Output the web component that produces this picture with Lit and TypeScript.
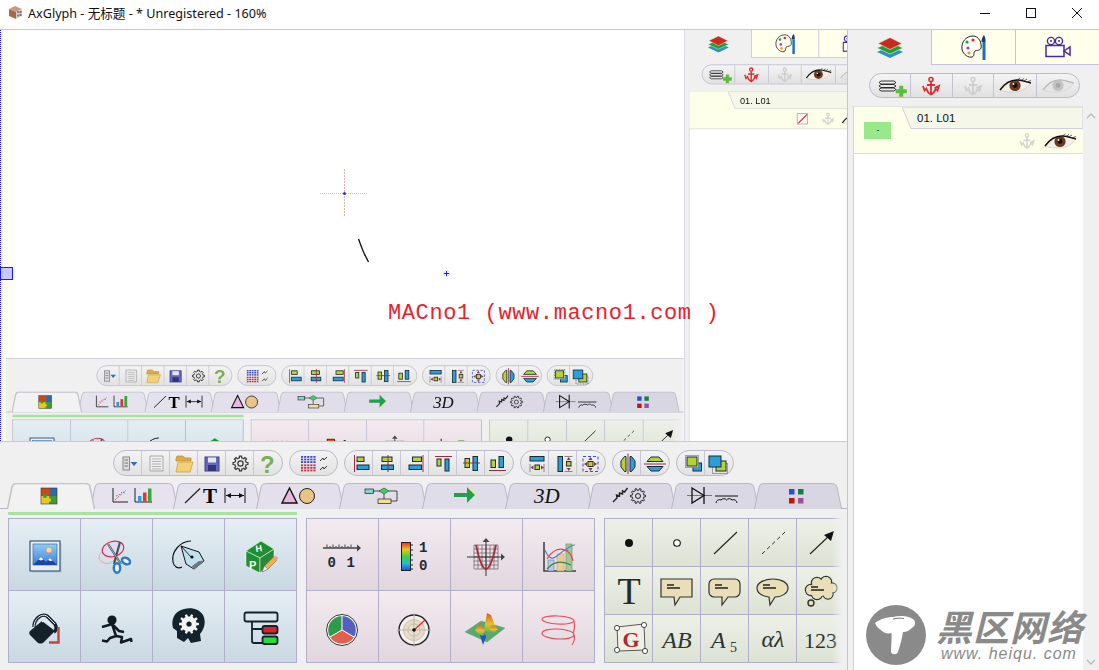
import { LitElement, html, css, svg } from "lit";
import { customElement, property } from "lit/decorators.js";

const LIME = "#b5d334", BLUE = "#2a9fd8", RED = "#9c2b3c", INK = "#1b2a38";

function gearPath(cx: number, cy: number, r: number, teeth: number) {
  let d = "";
  const inner = r * 0.76;
  const step = (Math.PI * 2) / teeth;
  for (let i = 0; i < teeth; i++) {
    const a = i * step;
    const pts = [
      [inner, a - step * 0.5], [inner, a - step * 0.28], [r, a - step * 0.18], [r, a + step * 0.18], [inner, a + step * 0.28],
    ];
    for (const [rad, ang] of pts) {
      d += `${d ? "L" : "M"}${(cx + rad * Math.cos(ang)).toFixed(2)} ${(cy + rad * Math.sin(ang)).toFixed(2)}`;
    }
  }
  return d + "Z";
}

const box = (x: number, y: number, w: number, h: number, fill: string) =>
  svg`<rect x=${x} y=${y} width=${w} height=${h} fill=${fill} stroke=${INK} stroke-width="1"/>`;
const line = (x1: number, y1: number, x2: number, y2: number, c = RED, w = 1) =>
  svg`<line x1=${x1} y1=${y1} x2=${x2} y2=${y2} stroke=${c} stroke-width=${w}/>`;

const ic = (w: number, h: number, body: unknown) =>
  html`<svg class="ic" width=${w} height=${h} viewBox="0 0 ${w} ${h}">${body}</svg>`;

/* ---------- toolbar ---------- */
const tb = (body: unknown) => ic(28, 25, body);
const toolGroups = [
  [
    tb(svg`<rect x="9" y="6" width="6.5" height="13" fill="#ddd" stroke="#888"/><path d="M10.5 9h3.5M10.5 12h3.5M10.5 15h3.5" stroke="#777"/><path d="M16.5 11h7l-3.500 4z" fill="#2a6fc0"/>`),
    tb(svg`<path d="M8 5h13v15H8z" fill="#eceef0" stroke="#a8a8a8"/><path d="M10 8h9M10 10.5h9M10 13h9M10 15.5h9M10 18h9" stroke="#b4b4b4"/>`),
    tb(svg`<path d="M6 8l1-3h6l2 2h6v3H6z" fill="#d9ad4a" stroke="#b99030" stroke-width=".7"/><path d="M6 21l2-10h15l-3 10z" fill="#f3cf75" stroke="#c79c3a" stroke-width=".7"/>`),
    tb(svg`<rect x="7" y="6" width="14" height="14" fill="#6668bd" stroke="#3f4090"/><rect x="10" y="6.5" width="8" height="5" fill="#e8e8f4"/><rect x="10" y="14" width="8" height="6" fill="#33347f"/>`),
    tb(svg`<path d=${gearPath(14.5, 12.5, 7.5, 8)} fill="none" stroke="#333" stroke-width="1.2"/><circle cx="14.5" cy="12.5" r="2.6" fill="none" stroke="#333" stroke-width="1.2"/>`),
    tb(svg`<text x="6" y="21.500" class="qm">?</text>`),
  ],
  [
    ic(47, 25, svg`
      ${[0, 1, 2, 3, 4, 5].map((r) => [0, 1, 2, 3, 4].map((c) => svg`<rect x=${11 + c * 3.1} y=${5 + r * 2.6 + (r > 2 ? 0.6 : 0)} width="2.2" height="1.8" fill=${r > 2 ? "#c0354a" : "#3f4fc0"}/>`))}
      <path d="M30 10l3-3 1 2 3-3M30 19l3-3 1 2 3-3" fill="none" stroke="#333" stroke-width="1"/>`),
  ],
  [
    tb(svg`${line(9.5, 4, 9.5, 21)}${box(12, 6, 7, 4.5, LIME)}${box(12, 14, 12, 4.5, BLUE)}`),
    tb(svg`${box(9, 6, 10, 4.5, LIME)}${box(8.5, 14, 12, 4.5, BLUE)}${line(15, 4, 15, 21)}`),
    tb(svg`${box(11.5, 6, 9, 4.5, LIME)}${box(8, 14, 12.5, 4.5, BLUE)}${line(22, 4, 22, 21)}`),
    tb(svg`${line(6, 5.5, 23, 5.5)}${box(8, 8, 4, 7, LIME)}${box(16, 8, 4, 12, BLUE)}`),
    tb(svg`${box(8, 7.5, 4.5, 9, LIME)}${box(16, 5.5, 4.5, 14, BLUE)}${line(6, 12, 23, 12)}`),
    tb(svg`${box(6, 9, 4.5, 7.5, LIME)}${box(14, 5.5, 4.5, 11, BLUE)}${line(4, 19.5, 21, 19.5)}`),
  ],
  [
    tb(svg`${box(9, 5.5, 14, 4.5, BLUE)}${box(14, 14, 4.5, 4.5, LIME)}<path d="M9 13v8M23 13v8" stroke="#888"/><path d="M9.5 16.5l3-2v4zM23 16.5l-3-2v4z" fill=${RED}/>`),
    tb(svg`${box(9, 5.5, 4.5, 15, BLUE)}${box(17.5, 10.5, 4.5, 4.5, LIME)}<path d="M15.5 5.5h8M15.5 20.5h8" stroke="#888"/><path d="M19.7 6l-2 3h4zM19.7 20l-2-3h4z" fill=${RED}/>`),
    tb(svg`<rect x="6" y="5.5" width="15" height="15" fill="none" stroke="#4050c8" stroke-dasharray="3 2"/>${box(11, 10.5, 5, 5, LIME)}<path d="M13.5 6l-2 3h4zM13.5 20l-2-3h4zM7 13l3-2v4zM20 13l-3-2v4z" fill=${RED}/>`),
  ],
  [
    tb(svg`<path d="M13 5.500v15H11.500L8 16v-6l3.500-4.500z" fill=${LIME} stroke=${INK}/><path d="M17 5.500h1.500l3.500 4.500v6l-3.500 4.500H17z" fill=${BLUE} stroke=${INK}/>${line(15, 2.5, 15, 23)}`),
    tb(svg`<path d="M6 10.500l4-4.500h8l4 4.500z" fill=${LIME} stroke=${INK}/><path d="M6 15.500h16l-4 4.500h-8z" fill=${BLUE} stroke=${INK}/>${line(3, 13, 25, 13)}`),
  ],
  [
    tb(svg`${box(16, 12, 8.5, 8, BLUE)}<rect x="8.500" y="4.500" width="13" height="12" fill="#f4f4f4" stroke="#555" stroke-dasharray="1 1"/>${box(10, 6, 10, 9, LIME)}`),
    tb(svg`<rect x="7.500" y="12.500" width="15" height="10" fill="none" stroke="#555" stroke-dasharray="1 1"/>${box(11, 10, 10, 10, LIME)}${box(4, 5, 12, 11, BLUE)}`),
  ],
];

/* ---------- tabs ---------- */
const puzzle = svg`<rect x="34" y="5" width="8" height="8" fill="#c8481c"/><rect x="42" y="5" width="8" height="8" fill="#2a6cb0"/><rect x="34" y="13" width="8" height="8" fill="#e8c818"/><rect x="42" y="13" width="8" height="8" fill="#3f9a3a"/><circle cx="42" cy="9" r="2" fill="#c8481c"/><circle cx="42" cy="17" r="2" fill="#e8c818"/><circle cx="38" cy="13" r="2" fill="#3f9a3a"/><rect x="34" y="5" width="16" height="16" fill="none" stroke="#333" stroke-width=".6"/>`;
const tabIcons = [
  puzzle,
  svg`<path d="M23 5v14h15" fill="none" stroke="#222" stroke-width="1"/><path d="M25 17l11-10" stroke="#e04050" stroke-dasharray="2 1.5"/><path d="M26 13l3-1 3-3 3 1" fill="none" stroke="#3a90d0" stroke-dasharray="1.5 1.5"/>
      <path d="M45 5v14h17" fill="none" stroke="#222" stroke-width="1"/><rect x="48" y="13" width="3.5" height="5.5" fill="#2a9fd8"/><rect x="53" y="9.5" width="3.5" height="9" fill="#d83838"/><rect x="58" y="5.5" width="3.5" height="13" fill="#38a838"/>`,
  svg`<line x1="12" y1="20" x2="27" y2="5.5" stroke="#222" stroke-width="1.2"/><text x="30" y="20" class="serifb" font-size="21">T</text>
      <path d="M52 5v15M72 5v15M53 12.5h18" stroke="#111" stroke-width="1"/><path d="M53 12.5l5-2.5v5zM71 12.5l-5-2.5v5z" fill="#111"/>`,
  svg`<path d="M33.5 5L26 20h15z" fill="#e8b8e0" stroke="#111" stroke-width="1.4"/><circle cx="51" cy="13" r="7.5" fill="#e8c584" stroke="#222" stroke-width="1"/>`,
  svg`<rect x="26" y="6" width="8.5" height="4.5" fill="#7fd8c8" stroke="#222" stroke-width=".7"/><path d="M34 8h7M50 8h8v10h-6M45 11v5" fill="none" stroke="#222" stroke-width=".8"/><path d="M45 5l5 3-5 3-5-3z" fill="#40d060" stroke="#222" stroke-width=".5"/><rect x="39" y="16" width="13" height="4.5" fill="#f0e090" stroke="#222" stroke-width=".7"/>`,
  svg`<path d="M32 10h13V4l8 8-8 8v-6H32z" fill="#1f9f4f"/><path d="M45 4l8 8-8 8" fill="none" stroke="#b5d334" stroke-width=".8"/>`,
  svg`<text x="29" y="20" class="serifi" font-size="21" fill="#111">3D</text>`,
  svg`<path d="M25 19l4-4-.5-3 3 1 0-3 3 1 0-3 2 1 3-4" fill="none" stroke="#222" stroke-width="1.4"/><path d=${gearPath(50, 13, 7.5, 10)} fill="none" stroke="#222" stroke-width="1"/><circle cx="50" cy="13" r="2.5" fill="none" stroke="#222"/>`,
  svg`<path d="M16 12.500h25" stroke="#777" stroke-width="1"/><path d="M21 5l12 7.500-12 7.500z" fill="none" stroke="#111" stroke-width="1.3"/><path d="M33 4v17" stroke="#111" stroke-width="1.3"/><path d="M44 13h23" stroke="#111" stroke-width="1"/><path d="M45 20a3.500 3.500 0 0 1 5-3a3.500 3.500 0 0 1 5.500 0a3.500 3.500 0 0 1 5.500 0a3.500 3.500 0 0 1 5 3" fill="none" stroke="#111" stroke-width="1"/>`,
  svg`<rect x="35" y="6" width="5.5" height="5.5" fill="#2a50d0"/><rect x="44" y="6" width="5.5" height="5.5" fill="#108048"/><rect x="35" y="15" width="5.5" height="5.5" fill="#c81010"/><rect x="44" y="15" width="5.5" height="5.5" fill="#9a509a"/>`,
];

/* ---------- grid icons ---------- */
const cell1 = [
  svg`<defs><linearGradient id="sky" x1="0" y1="0" x2="0" y2="1"><stop offset="0" stop-color="#8fcdf0"/><stop offset="1" stop-color="#3a7fdc"/></linearGradient></defs>
      <rect x="23" y="24" width="30" height="30" fill="#b9cad6" opacity=".6"/><rect x="21" y="22" width="30" height="30" fill="#e6eef4" stroke="#1d3a5c" stroke-width="1"/>
      <rect x="24" y="25" width="24" height="21" fill="url(#sky)" stroke="#2a5a9c" stroke-width=".6"/><circle cx="40" cy="31" r="3" fill="#f7d99a" stroke="#e8866a" stroke-width=".7"/>
      <path d="M24 46l8-8 5 5 4-4 7 7z" fill="#1f44a8"/><path d="M29.5 40.5l2.5-2.5 2.5 2.5-2.5 1zM39 41l2-2 2.5 2.5-2 .5z" fill="#fff"/>`,
  svg`<ellipse cx="26" cy="38" rx="8" ry="6.5" fill="none" stroke="#e4a8a8" stroke-width="1"/><ellipse cx="32" cy="30" rx="11" ry="7.5" transform="rotate(-15 32 30)" fill="#dcdcf4" stroke="#d83040" stroke-width="1.2"/>
      <path d="M27 25l13 20M39 23l-6 22" stroke="#4a5460" stroke-width="2.2"/><path d="M27 25l13 20" stroke="#b8c0c8" stroke-width=".8"/>
      <ellipse cx="36" cy="49" rx="3.2" ry="4.8" fill="#e8f0f4" stroke="#2a7cc0" stroke-width="2.4"/><ellipse cx="45" cy="42" rx="4.4" ry="3" transform="rotate(30 45 42)" fill="#e8f0f4" stroke="#2a7cc0" stroke-width="2.4"/>`,
  svg`<path d="M38 22C27 22 18 33 20 43c1 5 5 7 9 5" fill="none" stroke="#111" stroke-width="1.2"/><path d="M28 27l18 6 5 9-10 8-8-5z" fill="#c0e0ee" stroke="#111" stroke-width="1"/><path d="M46 42l6-0.500-11 9-2-3.500z" fill="#6c7880"/><path d="M28 27l10 11" stroke="#111" stroke-width=".9"/><circle cx="39" cy="38" r="1.6" fill="#111"/>`,
  svg`<path d="M21 32l15-10 13 8-14 9z" fill="#1f9030" stroke="#fff" stroke-width=".5"/><path d="M21 32l14 7v15l-14-7z" fill="#1f9030" stroke="#fff" stroke-width=".5"/><path d="M35 39l14-9v9l-14 15z" fill="#27883a" stroke="#fff" stroke-width=".5"/>
      <text x="31" y="33" class="sansb" font-size="9" fill="#fff" transform="rotate(-8 31 33)">H</text><text x="24" y="50" class="sansb" font-size="11" fill="#fff">P</text>
      <path d="M37 53l2.5-6 9-9 3.5 3-9 9z" fill="#eeb050" stroke="#8a6a3a" stroke-width=".6"/><path d="M48.5 38l2-1.5 3 2.5-1.7 2z" fill="#f0a0a0"/><path d="M37 53l2.5-6 3.5 3z" fill="#eee" stroke="#555" stroke-width=".4"/>`,
  svg`<path d="M21 40l12-10 13 10-11 11c-2 2-5 2-7 0l-7-7c-1-1-1-3 0-4z" fill="#14212a"/><path d="M25 36c0-8 7-14 13-11l8 8c2 3 1 7-1 8" fill="none" stroke="#14212a" stroke-width="3.400"/><path d="M25 36c0-8 7-14 13-11l8 8" fill="none" stroke="#e4edf3" stroke-width="1"/><path d="M33 31c2-2 4-2 6 0l4 5" fill="none" stroke="#e4edf3" stroke-width="1.200"/>
      <path d="M49.500 36v15.500H40" fill="none" stroke="#b84a3c" stroke-width="2.400"/>`,
  svg`<circle cx="31" cy="29" r="4.6" fill="#111a20"/><path d="M21 36l7-2 3-1 7 7 5 1M31 33l4 12M35 45l-6 2-3 3.500-5-1M35 45l6 1-1 5.500 10-3.500 .5 3" fill="none" stroke="#111a20" stroke-width="2.500" stroke-linejoin="round"/>`,
  svg`<path d="M31 51l-7-4v-7l-4-3c-2-8 1-14 6-17 9-5 20-3 24 4 3 6 2 13-3 19l1 7-10 2-3-5z" fill="#14232b"/><path d=${gearPath(36, 33, 10, 10)} fill="#f4f4f4"/><circle cx="36" cy="33" r="2.6" fill="#14232b"/>`,
  svg`<rect x="19.5" y="21.5" width="33" height="9" rx="2" fill="none" stroke="#14232b" stroke-width="1.8"/><path d="M27 31v19a2 2 0 0 0 2 2h8M27 38h10" fill="none" stroke="#14232b" stroke-width="1.8"/><rect x="37.5" y="35" width="15" height="7.5" rx="2" fill="#e02030" stroke="#14232b" stroke-width="1.8"/><rect x="37.5" y="45.5" width="15" height="7.5" rx="2" fill="#20e040" stroke="#14232b" stroke-width="1.8"/>`,
];
const rainbow = svg`<defs><linearGradient id="rb" x1="0" y1="0" x2="0" y2="1"><stop offset="0" stop-color="#e83020"/><stop offset=".25" stop-color="#f0c020"/><stop offset=".5" stop-color="#40d040"/><stop offset=".75" stop-color="#20c0d0"/><stop offset="1" stop-color="#2050e0"/></linearGradient>
  <linearGradient id="pk" x1="0" y1="0" x2="0" y2="1"><stop offset="0" stop-color="#d06020"/><stop offset=".55" stop-color="#e8c030"/><stop offset="1" stop-color="#60b050"/></linearGradient></defs>`;
const cell2 = [
  svg`<path d="M16 29h36" stroke="#444" stroke-width="1.3"/><path d="M50 25.5l4 3.5-4 3.5z" fill="#444"/><path d="M20 25.5v3M26 25.5v3M32 25.5v3M38 25.5v3M44 25.5v3" stroke="#444"/><path d="M23 27v2M29 27v2M35 27v2M41 27v2" stroke="#444"/>
      <text x="20.5" y="48" class="monob" font-size="14" fill="#1b2a38">0</text><text x="39.5" y="48" class="monob" font-size="14" fill="#1b2a38">1</text>`,
  svg`${rainbow}<rect x="22.5" y="23.5" width="9" height="28" fill="url(#rb)" stroke="#222" stroke-width="1"/><path d="M32 26h2M32 31h2M32 36h2M32 41h2M32 46h2M32 50h2" stroke="#222"/>
      <text x="40" y="33" class="monob" font-size="14" fill="#1b2a38">1</text><text x="40" y="51" class="monob" font-size="14" fill="#1b2a38">0</text>`,
  svg`<path d="M23 26h24v24H23zM23 30h24M23 34h24M23 38h24M23 42h24M23 46h24M27 26v24M31 26v24M35 26v24M39 26v24M43 26v24" fill="none" stroke="#7a6a72" stroke-width=".8"/><path d="M16 38h36M35 21v36" stroke="#333" stroke-width="1"/><path d="M35 19l-3.5 4h7zM54 38l-4-3.5v7z" fill="#444"/><path d="M25 26c3 14 6 24 10 24s7-10 10-24" fill="none" stroke="#a8283c" stroke-width="1.8"/>`,
  svg`<path d="M21 23v29h32" fill="none" stroke="#444" stroke-width="1.6"/><rect x="25" y="41" width="6" height="11" fill="#b8cce0" stroke="#5a80b0" stroke-width=".6"/><rect x="34" y="35" width="7" height="17" fill="#eacb94" stroke="#c8a060" stroke-width=".6"/><rect x="43" y="25" width="6" height="27" fill="#a0c898" stroke="#60905a" stroke-width=".6"/>
      <path d="M22 31c4 10 8 9 12 6s8-8 11-5" fill="none" stroke="#4a80d0" stroke-width="1.2"/><path d="M24 40c6-10 14-12 20-8 3 2 5 5 6 10" fill="none" stroke="#e04850" stroke-width="1.2"/><path d="M24 50c6-7 14-9 24-4" fill="none" stroke="#408040" stroke-width="1.2"/><path d="M42 31c3-2 6-5 10-5" fill="none" stroke="#4a80d0" stroke-width="1.2"/>`,
  svg`<circle cx="35" cy="39" r="15.5" fill="#fff" stroke="#333" stroke-width="1"/><path d="M35 39l0-14a14 14 0 0 0-12 21z" fill="#2f9a4c"/><path d="M35 39l0-14a14 14 0 0 1 12 21z" fill="#5460c0"/><path d="M35 39l12 7a14 14 0 0 1-24 0z" fill="#e0604a"/><path d="M35 39V25M35 39l12 7M35 39l-12 7" stroke="#fff" stroke-width="1"/>`,
  svg`<circle cx="35" cy="39" r="15" fill="#f4eef0" stroke="#222" stroke-width="1.4"/><circle cx="35" cy="39" r="10.5" fill="#e6dcc8" stroke="#cfc4b0"/><circle cx="35" cy="39" r="6" fill="#ece2cc" stroke="#c8bca8"/><path d="M18 39h34M35 22v34" stroke="#bcb4b0" stroke-width="1"/><path d="M35 39l11-10" stroke="#e82030" stroke-width="1.2"/><circle cx="35" cy="39" r="1.8" fill="#111"/>`,
  svg`${rainbow}<path d="M14 41l16-11 24 7-18 14z" fill="#5aaa70" stroke="#3e9060" stroke-width=".3"/><path d="M33 39l3-17 4 2 5 13-6 5z" fill="url(#pk)"/><path d="M24 39l5-6 5 7-4 5z" fill="url(#pk)"/><path d="M38 38l4-4 5 4-4 4z" fill="url(#pk)"/><path d="M29 44l3 1 2-2 1 2 0 1-3 8z" fill="#2050d0"/>`,
  svg`<ellipse cx="35" cy="29" rx="16" ry="4" transform="rotate(3 35 29)" fill="none" stroke="#e84858" stroke-width="1.1"/><ellipse cx="35" cy="43" rx="16" ry="5" transform="rotate(3 35 43)" fill="none" stroke="#e84858" stroke-width="1.1"/><path d="M51 30c1 5 1 8-1 12M51 44c1 3 0 7-2 10" fill="none" stroke="#e84858" stroke-width="1.1"/>`,
];
const bubbleLines = svg`<path d="M14 18h7M14 21h13" stroke="#222" stroke-width="1.5"/>`;
const B = "#e8dfb8";
const cell3 = [
  svg`<circle cx="24" cy="24" r="4" fill="#111"/>`,
  svg`<circle cx="24" cy="24" r="3.3" fill="#fff" stroke="#111" stroke-width="1.1"/>`,
  svg`<line x1="13" y1="35" x2="36" y2="13" stroke="#222" stroke-width="1.1"/>`,
  svg`<line x1="13" y1="35" x2="36" y2="13" stroke="#333" stroke-width="1" stroke-dasharray="4 3"/>`,
  svg`<line x1="13" y1="35" x2="33" y2="16" stroke="#222" stroke-width="1.1"/><path d="M37 12l-3 10-7-6z" fill="#111"/>`,
  svg`<text x="24" y="37" text-anchor="middle" class="serif" font-size="38" fill="#222d28">T</text>`,
  svg`<path d="M8 12h31v18H27l-5 8-1-8H8z" fill=${B} stroke="#333" stroke-width="1.2"/>${bubbleLines}`,
  svg`<path d="M13 12h21a5 5 0 0 1 5 5v8a5 5 0 0 1-5 5H27l-6 8v-8h-8a5 5 0 0 1-5-5v-8a5 5 0 0 1 5-5z" fill=${B} stroke="#333" stroke-width="1.2"/>${bubbleLines}`,
  svg`<path d="M24 12c9 0 15 4 15 9s-6 9-13 9l-5 8-1-8c-7-1-12-4-12-9s7-9 16-9z" fill=${B} stroke="#333" stroke-width="1.2"/>${bubbleLines}`,
  svg`<g stroke="#333" stroke-width="1.4" fill=${B}><circle cx="14" cy="23" r="5.5"/><circle cx="20" cy="16" r="5.5"/><circle cx="29" cy="15" r="5.5"/><circle cx="35" cy="21" r="5"/><circle cx="31" cy="27" r="5"/><circle cx="20" cy="27" r="5.5"/><circle cx="14" cy="36" r="3"/></g><g fill=${B}><circle cx="14" cy="23" r="5"/><circle cx="20" cy="16" r="5"/><circle cx="29" cy="15" r="5"/><circle cx="35" cy="21" r="4.5"/><circle cx="31" cy="27" r="4.5"/><circle cx="20" cy="27" r="5"/><circle cx="24" cy="21" r="8"/></g><path d="M14 20h7M14 23h13" stroke="#222" stroke-width="1.5"/>`,
  svg`<path d="M12 12l27-3 1 26-27 1z" fill="#f2f0e6" stroke="#333" stroke-width=".8"/><text x="26" y="32" text-anchor="middle" class="serifb" font-size="22" fill="#b02828">G</text><g fill="#fff" stroke="#333" stroke-width=".9"><circle cx="12" cy="13" r="2.6"/><circle cx="39" cy="10" r="2.6"/><circle cx="40" cy="36" r="2.6"/><circle cx="12" cy="35" r="2.6"/></g>`,
  svg`<text x="24" y="33" text-anchor="middle" class="serifi" font-size="24" fill="#2b3430">AB</text>`,
  svg`<text x="10" y="33" class="serifi" font-size="24" fill="#2b3430">A</text><text x="29" y="37" class="serif" font-size="14" fill="#2b3430">5</text>`,
  svg`<text x="24" y="32" text-anchor="middle" class="serifi" font-size="24" fill="#2b3430">αλ</text>`,
  svg`<text x="7" y="33" class="serif" font-size="22" fill="#2b3430">123</text>`,
];

/* ---------- palette window ---------- */
@customElement("palette-panel")
class PalettePanel extends LitElement {
  static styles = css`
    :host { display: block; width: 847px; height: 229px; background: #f0f0f0; border-top: 1px solid #c9c8dc; box-sizing: border-box; }
    .ic { display: block; }
    .tools { display: flex; gap: 6px; padding: 8px 0 0 113px; height: 34px; box-sizing: border-box; }
    .pill { display: flex; height: 26px; box-sizing: border-box; border: 1px solid #bdbbcb; border-radius: 13px; background: linear-gradient(#f3f3f3, #e2e2e2); }
    .btn + .btn { border-left: 1px solid #c9c7d4; margin-left: -1px; }
    .tabs { display: flex; margin-top: 7px; padding-left: 7px; height: 26px; box-sizing: border-box; border-bottom: 1px solid #b6b4cc; }
    .tab { flex: none; margin-right: -5px; height: 26px; }
    .tab.on { position: relative; z-index: 1; }
    .green { margin: 3px 0 3px 8px; width: 289px; height: 3px; background: #a9e2a0; }
    .grids { display: flex; gap: 9px; padding-left: 8px; }
    .grid { display: grid; border-top: 1px solid #b0aec8; border-left: 1px solid #b0aec8; align-self: start; }
    .g4 { grid-template-columns: repeat(4, 72px); grid-auto-rows: 72px; }
    .g5 { grid-template-columns: repeat(5, 48px); grid-auto-rows: 48px; }
    .cell { border-right: 1px solid #b0aec8; border-bottom: 1px solid #b0aec8; box-sizing: border-box; overflow: hidden; }
    .blue .cell { background: linear-gradient(#e5eef4, #c9d8e2); }
    .pink .cell { background: linear-gradient(#f3ebf0, #e1d6de); }
    .sage .cell { background: linear-gradient(#edf0e8, #dce2d4); }
    .clip { position: relative; width: 238px; height: 145px; overflow: hidden; }
    .fade { position: absolute; right: 0; top: 0; bottom: 0; width: 10px; background: linear-gradient(90deg, rgba(240,240,240,0), #f0f0f0); }
    text { white-space: pre; }
    .qm { font: bold 24px "Liberation Sans", sans-serif; fill: #7dad54; }
    .serif { font-family: "Liberation Serif", serif; }
    .serifb { font-family: "Liberation Serif", serif; font-weight: bold; }
    .serifi { font-family: "Liberation Serif", serif; font-style: italic; }
    .sansb { font-family: "Liberation Sans", sans-serif; font-weight: bold; }
    .monob { font-family: "Liberation Mono", monospace; font-weight: bold; }
  `;
  tabShape(i: number) {
    const t = i / 9;
    const ch = (a: number, b: number) => Math.round(a + (b - a) * t);
    const fill = i === 0 ? "#f2f2f2" : `rgb(${ch(232, 216)},${ch(229, 214)},${ch(240, 224)})`;
    const stroke = i === 0 ? "#c4c4cc" : "#b8b6ca";
    return html`<svg class="tab ${i === 0 ? "on" : ""}" width="88" height="26" viewBox="0 0 88 26">
      <path d="M.5 26L5 4Q5.8.5 9.5.5H78.5Q82.2.5 83 4L87.5 26" fill=${fill} stroke=${stroke} stroke-width=${i === 0 ? 1.6 : 1}/>
      ${tabIcons[i]}
    </svg>`;
  }
  render() {
    const cells = (list: unknown[], size: number) =>
      list.map((c) => html`<div class="cell">${ic(size, size, c)}</div>`);
    return html`
      <div class="tools">
        ${toolGroups.map((g) => html`<div class="pill">${g.map((b) => html`<div class="btn">${b}</div>`)}</div>`)}
      </div>
      <div class="tabs">${tabIcons.map((_, i) => this.tabShape(i))}</div>
      <div class="green"></div>
      <div class="grids">
        <div class="grid g4 blue">${cells(cell1, 72)}</div>
        <div class="grid g4 pink">${cells(cell2, 72)}</div>
        <div class="clip"><div class="grid g5 sage">${cells(cell3, 48)}</div><div class="fade"></div></div>
      </div>
    `;
  }
}

/* ---------- layers window ---------- */
const anchor = (c: string, s = 24) => html`<svg class="ic" width=${s} height=${s} viewBox="0 0 24 24">
  <circle cx="12" cy="5.5" r="2" fill="none" stroke=${c} stroke-width="1.6"/><path d="M12 7.5v13M8 11h8M4 12l1.5 4.5 1.8-2C8 17 10 19.5 12 20.5c2-1 4-3.5 4.7-6l1.8 2L20 12l-4.5 2" fill="none" stroke=${c} stroke-width="1.8"/>
</svg>`;
const eye = () => html`<svg class="ic" width="42" height="25" viewBox="0 0 42 25">
  <path d="M6 17C11 10 17 7 24 7c5 0 8 2 13 3-4 5-9 9-16 9-6 0-11 0-15-2z" fill="#f4efe6" stroke="#c8b8a0" stroke-width=".5"/>
  <circle cx="21" cy="12.5" r="5.6" fill="#6b3a20"/><circle cx="21" cy="12.5" r="2.4" fill="#111"/><circle cx="19.5" cy="11" r=".9" fill="#fff"/>
  <path d="M6 17C11 10 17 6.5 24 7c5 .3 8 2 13 3" fill="none" stroke="#111" stroke-width="1.5"/>
  <path d="M27 7.5l3-2M30 8l3-2M33 9l4-1.5M24 7l2-2.5" stroke="#222" stroke-width=".7"/>
</svg>`;
const eyeGrey = html`<svg class="ic" width="42" height="25" viewBox="0 0 42 25">
  <path d="M6 17C11 10 17 7 24 7c5 0 8 2 13 3-4 5-9 9-16 9-6 0-11 0-15-2z" fill="#e6e6e6" stroke="#ccc" stroke-width=".5"/>
  <circle cx="21" cy="12.5" r="5.6" fill="#c4c4c4"/><circle cx="21" cy="12.5" r="2.4" fill="#a8a8a8"/>
  <path d="M6 17C11 10 17 6.5 24 7c5 .3 8 2 13 3" fill="none" stroke="#b8b8b8" stroke-width="1.2"/>
</svg>`;

@customElement("layers-panel")
class LayersPanel extends LitElement {
  @property({ type: Boolean }) back = false;
  static styles = css`
    :host { display: flex; flex-direction: column; width: 251px; height: 640px; background: #f0f0f0; box-sizing: border-box; }
    .ic { display: block; }
    .tabs { display: flex; height: 35px; flex: none; }
    .tab { flex: 1; display: flex; align-items: center; justify-content: center; box-sizing: border-box; background: #ffffec; border-bottom: 1px solid #c4c2dc; border-left: 1px solid #c4c2dc; }
    .tab.on { background: #f0f0f0; border: none; }
    .pill { display: flex; align-self: flex-start; margin: 8px 0 0 21px; height: 25px; width: 211px; box-sizing: border-box; border: 1px solid #bdbbcb; border-radius: 13px; background: linear-gradient(#f4f4f4, #e1e1e1); overflow: hidden; }
    .pill > div { flex: 1; display: flex; align-items: center; justify-content: center; }
    .pill > div + div { border-left: 1px solid #c4c2d4; }
    .body { flex: 1; display: flex; margin: 8px 0 0 5px; min-height: 0; }
    .list { width: 230px; background: #fff; border-left: 1px solid #d4d2e2; box-sizing: border-box; }
    .item { position: relative; height: 48px; background: #feffe9; border-top: 1px solid #e4e4e0; border-bottom: 1px solid #dcdcd8; box-sizing: border-box; }
    .head { display: flex; justify-content: flex-end; height: 22px; }
    .label { font: 11.5px "Liberation Sans", "Noto Sans", sans-serif; fill: #111; }
    .row { display: flex; justify-content: flex-end; align-items: center; height: 24px; gap: 2px; padding-right: 2px; }
    .swatch { position: absolute; left: 10px; top: 15px; width: 27px; height: 17px; background: #98e98a; display: flex; align-items: center; justify-content: center; }
    .swatch i { width: 2px; height: 1px; background: #355; }
    .slash { width: 14px; height: 14px; margin-right: 13px; border: 1.5px solid #aaa; box-sizing: border-box; background: linear-gradient(135deg, transparent 44%, #e85060 44%, #e85060 56%, transparent 56%) #fbf6f0; transform: scaleY(-1) scaleX(-1); }
    .scroll { flex: 1; display: flex; flex-direction: column; justify-content: space-between; align-items: center; padding: 7px 0 5px; }
    svg text { white-space: pre; }
  `;
  render() {
    return html`
      <div class="tabs">
        <div class="tab on">
          <svg class="ic" width="28" height="24" viewBox="0 0 28 24">
            <path d="M1 16l13-6 13 6-13 6z" fill="#2f90c0"/><path d="M1 12l13-6 13 6-13 6z" fill="#20a030" stroke="#f0f0f0" stroke-width=".6"/><path d="M2 7.5L14 1.5l12 6-12 6z" fill="#cc2a1c" stroke="#f0f0f0" stroke-width=".6"/>
          </svg>
        </div>
        <div class="tab">
          <svg class="ic" width="28" height="28" viewBox="0 0 28 28">
            <path d="M13 3C6 3 1 9 2 16c1 6 7 9 10 8 3-1 1-4 3-6 2-1 5 0 6-3 1-5-2-12-8-12z" fill="#fffff4" stroke="#222" stroke-width="1"/><circle cx="8" cy="15" r="1.6" fill="#a040d0"/><circle cx="7" cy="9" r="1.6" fill="#20a040"/><circle cx="13" cy="7" r="1.6" fill="#e02050"/><circle cx="9" cy="20" r="1.6" fill="#f0a020"/>
            <path d="M24 2c-2 2-2.500 5-2.500 7h4c0-2 0-5-1.500-7z" fill="#14406c"/><rect x="22.500" y="9" width="3" height="18" fill="#1a70b0"/>
          </svg>
        </div>
        <div class="tab">
          <svg class="ic" width="26" height="22" viewBox="0 0 26 22">
            <circle cx="6" cy="5" r="3.600" fill="none" stroke="#4a2a9a" stroke-width="1.400"/><circle cx="14" cy="5" r="3.600" fill="none" stroke="#4a2a9a" stroke-width="1.400"/><circle cx="6" cy="5" r="1" fill="#4a2a9a"/><circle cx="14" cy="5" r="1" fill="#4a2a9a"/>
            <rect x="1" y="9.500" width="18" height="11" fill="#fff" stroke="#4a2a9a" stroke-width="1.500"/><path d="M19 15l6-4v8z" fill="#fff" stroke="#4a2a9a" stroke-width="1.500"/>
          </svg>
        </div>
      </div>
      <div class="pill">
        <div><svg class="ic" width="36" height="23" viewBox="0 0 36 23">
          <path d="M9 7h13l2 1.500-2 1.500H9L7 8.500zM9 10.500h13l2 1.500-2 1.500H9L7 12zM9 14h13l2 1.500-2 1.500H9L7 15.500z" fill="none" stroke="#222" stroke-width=".9"/>
          <path d="M27.500 12h3.500v3.500h3.500V19H31v3.500h-3.500V19H24v-3.500h3.500z" fill="#50c040" stroke="#88a820" stroke-width=".5"/>
        </svg></div>
        <div>${anchor("#dc2c34")}</div>
        <div>${anchor("#cfcfcf")}</div>
        <div>${eye()}</div>
        <div>${eyeGrey}</div>
      </div>
      <div class="body">
        <div class="list">
          <div class="item">
            <div class="head">
              <svg width="181" height="22" viewBox="0 0 181 22">
                <path d="M0 0L9 21.500H181V0z" fill="#f5f7e8" stroke="#cfcfd8" stroke-width="1"/>
                <text x="15" y="15" class="label">01. L01</text>
              </svg>
            </div>
            <div class="row">
              ${this.back ? html`<div class="slash"></div>` : ""}
              ${anchor("#d4d4d0", 20)}
              ${eye()}
            </div>
            ${this.back ? "" : html`<div class="swatch"><i></i></div>`}
          </div>
        </div>
        <div class="scroll">
          <svg class="ic" width="10" height="6" viewBox="0 0 10 6"><path d="M1 5l4-4 4 4" fill="none" stroke="#bbb" stroke-width="1.400"/></svg>
          <svg class="ic" width="10" height="6" viewBox="0 0 10 6"><path d="M1 1l4 4 4-4" fill="none" stroke="#bbb" stroke-width="1.400"/></svg>
        </div>
      </div>
    `;
  }
}

/* ---------- root ---------- */
@customElement("app-root")
class AppRoot extends LitElement {
  static styles = css`
    :host { display: flex; flex-direction: column; width: 1099px; height: 670px; background: #fff; overflow: hidden; font-family: "Noto Sans", "Noto Sans CJK SC", sans-serif; }
    .ic { display: block; }
    .title { flex: none; height: 30px; box-sizing: border-box; display: flex; align-items: center; padding: 0 0 4px 8px; border-bottom: 1px solid #c9c6d8; background: #fff; }
    .title span { margin-left: 5px; font: 12.6px "Noto Sans", "Noto Sans CJK SC", sans-serif; color: #111; white-space: nowrap; }
    .ctrl { margin: 0 -1px 0 auto; display: flex; }
    .ctrl div { width: 46px; height: 25px; display: flex; align-items: center; justify-content: center; }
    .desk { flex: 1; position: relative; overflow: hidden; }
    .win { position: absolute; }
    .dots { position: absolute; left: 0; top: 0; height: 411px; border-left: 1px dotted #1a1aff; }
    .handle { position: absolute; left: 0; top: 237px; width: 13px; height: 13px; box-sizing: border-box; background: #c8c8ff; border: 1px solid #1a1aff; }
    .art { position: absolute; left: 310px; top: 130px; }
    .mark { position: absolute; left: 388px; top: 269px; font: 22px "Liberation Mono", monospace; letter-spacing: 0.6px; color: #e8222c; white-space: pre; line-height: 30px; }
    .backp { left: 6px; top: 328px; transform: scale(.8); transform-origin: 0 0; filter: blur(.45px); }
    .backl { left: 684px; top: 0; transform: scale(.8); transform-origin: 0 0; filter: blur(.4px); border-left: 1px solid #c9c8dc; }
    .frontp { left: 0; top: 411px; }
    .frontl { left: 847px; top: 0; border-left: 1px solid #c4c2dc; }
    .wm { position: absolute; left: 866px; top: 575px; display: flex; gap: 10px; color: #8a8a8a; pointer-events: none; }
    .wm b { display: block; font: italic bold 36px/36px "Noto Sans CJK SC", sans-serif; letter-spacing: 1px; margin-top: 2px; white-space: nowrap; }
    .wm small { display: block; font: italic 16px/18px "Liberation Sans", sans-serif; letter-spacing: 1px; margin: 2px 0 0 5px; white-space: nowrap; }
  `;
  render() {
    return html`
      <div class="title">
        <svg class="ic" width="15" height="15" viewBox="0 0 15 15">
          <path d="M1 4l6-3 7 3-6 3z" fill="#c89a80"/><path d="M1 4l7 3v7l-7-3z" fill="#a86850"/><path d="M8 7l6-3v7l-6 3z" fill="#d8d0c8"/><rect x="9" y="6" width="2" height="2" fill="#40a0e0"/><rect x="11.500" y="6" width="2" height="2" fill="#e04040"/><rect x="9" y="9.500" width="2" height="2" fill="#40b040"/><rect x="11.500" y="9" width="2" height="2" fill="#a050c0"/>
        </svg>
        <span>AxGlyph - 无标题 - * Unregistered - 160%</span>
        <div class="ctrl">
          <div><svg class="ic" width="10" height="10" viewBox="0 0 10 10"><path d="M0 5.500h10" stroke="#111"/></svg></div>
          <div><svg class="ic" width="10" height="10" viewBox="0 0 10 10"><rect x=".5" y=".5" width="9" height="9" fill="none" stroke="#111"/></svg></div>
          <div><svg class="ic" width="10" height="10" viewBox="0 0 10 10"><path d="M0 0l10 10M10 0L0 10" stroke="#111"/></svg></div>
        </div>
      </div>
      <div class="desk">
        <div class="dots"></div>
        <div class="handle"></div>
        <svg class="art ic" width="150" height="120" viewBox="0 0 150 120">
          <path d="M34.500 9v48" stroke="#e2b0a6" stroke-width="1" stroke-dasharray="2 1"/><path d="M10 33.500h48" stroke="#e6b8b0" stroke-width="1" stroke-dasharray="1 1"/>
          <circle cx="34.500" cy="33.500" r="1.500" fill="#2a2aff"/>
          <path d="M48.500 79c3 8 5 14 7 17 1 2 2 4 3 6" fill="none" stroke="#111" stroke-width="1.400"/>
          <path d="M134 113.500h5M136.500 111v5" stroke="#1a1aff" stroke-width="1"/><circle cx="136.500" cy="113.500" r="3" fill="none" stroke="#9a9aff" stroke-width=".8" stroke-dasharray="1 1"/>
        </svg>
        <div class="win backp"><palette-panel></palette-panel></div>
        <div class="win backl"><layers-panel back></layers-panel></div>
        <div class="mark">MACno1 (www.macno1.com )</div>
        <div class="win frontp"><palette-panel></palette-panel></div>
        <div class="win frontl"><layers-panel></layers-panel></div>
        <div class="wm">
          <svg class="ic" width="60" height="60" viewBox="0 0 60 60">
            <circle cx="30" cy="30" r="30" fill="#8a8a8a"/>
            <path d="M9 18C14 14 21 12 27 12 34 10 44 11 48 15 50 18 49 21 47 22 44 25 41 27 37 27 36 33 35 38 32 47 31 50 26 50 25 47 25 40 26 34 25.500 28 22 29 18 28 16 26 13 24 10 21 9 18z" fill="#fff"/>
            <path d="M27 14c4-1 8-1 11-.5" stroke="#777" fill="none" stroke-width="1"/>
          </svg>
          <div><b>黑区网络</b><small>www. heiqu. com</small></div>
        </div>
      </div>
    `;
  }
}
